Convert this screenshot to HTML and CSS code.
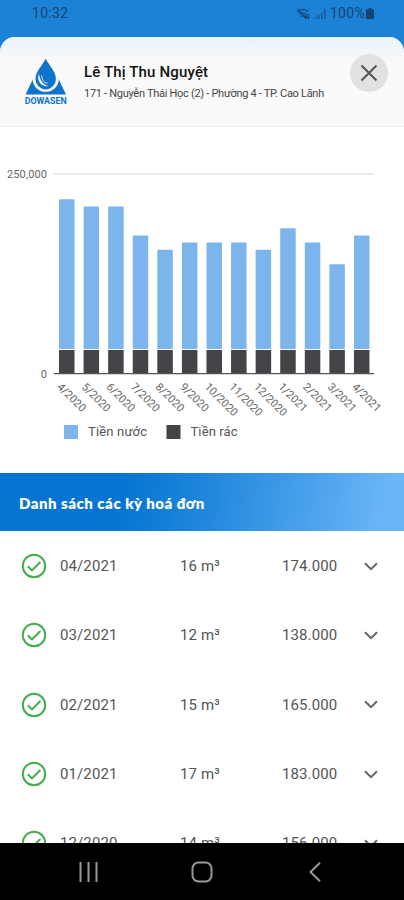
FILE: index.html
```html
<!DOCTYPE html>
<html lang="vi">
  <head>
    <meta charset="UTF-8" />
    <meta name="viewport" content="width=device-width, initial-scale=1.0" />
    <title>Dowasen | Hoá đơn tiền nước</title>
    <link rel="stylesheet" href="styles.css">
  </head>

  <body>
    <div class="status-bar">
      <span class="time">10:32</span>
      <div class="status-right">
        <svg width="15" height="12" viewBox="0 0 15 12" fill="none" stroke="currentColor" stroke-width="1.2">
          <path d="M1 3.6C4 .8 9 .8 12 3.6M3 6.2c2-1.8 5-1.8 7 0M5 8.6c1-.8 2.200-.8 3.200 0M1.500 1.500l8 8M10 5.500v5M12.500 6v5M8.500 9l1.500 1.500L11.500 9"/>
        </svg>
        <svg class="signal" width="11" height="10" viewBox="0 0 11 10" fill="currentColor">
          <path d="M0 8h1.600v2H0zM3 6h1.600v4H3zM6 3.500h1.600V10H6zM9 0h1.600v10H9z"/>
        </svg>
        <span>100%</span>
        <svg class="battery" width="8" height="11" viewBox="0 0 8 11" fill="currentColor">
          <path d="M2.500 0h3v1.200H7a1 1 0 0 1 1 1V10a1 1 0 0 1-1 1H1a1 1 0 0 1-1-1V2.200a1 1 0 0 1 1-1h1.500z"/>
        </svg>
      </div>
    </div>

    <main class="sheet">
      <header>
        <svg class="logo" width="46" height="48" viewBox="0 0 46 48">
          <path fill="#0f72cc" d="M10.500 20L2.500 36.500h40.500L35 20z"/>
          <path fill="#fafafa" d="M22.700 0C19 7 9.700 13 9.700 21.500a13 12.300 0 0 0 26 0C35.700 13 26.500 7 22.700 0z"/>
          <path fill="#0f72cc" d="M22.700 .5C20 7 12.500 13 12.500 21a10.200 10.400 0 0 0 20.400 0C32.900 13 25.500 7 22.700 .5z"/>
          <path fill="#fff" d="M15.800 15.500c-2.300 7 2 13.500 9.700 12.600-5.500-1.300-8.700-6-9.700-12.600z"/>
          <path fill="none" stroke="#fff" stroke-width=".8" d="M18.700 17.500c0 4 2 7 5.800 8"/>
          <text class="logo-text" x="22.700" y="46" text-anchor="middle" textLength="42" lengthAdjust="spacingAndGlyphs">DOWASEN</text>
        </svg>
        <div class="customer">
          <h1>Lê Thị Thu Nguyệt</h1>
          <p>171 - Nguyễn Thái Học (2) - Phường 4 - TP. Cao Lãnh</p>
        </div>
        <button class="close-btn" aria-label="Đóng">
          <svg width="18" height="18" viewBox="0 0 18 18" fill="none" stroke="#555" stroke-width="2">
            <path d="M1.500 1.500l15 15M16.500 1.500l-15 15"/>
          </svg>
        </button>
      </header>

      <section class="chart">
        <svg id="chart" width="404" height="346" viewBox="0 127 404 346">
          <path class="grid-line" d="M54 174h320"/>
          <text class="axis-label" x="47" y="178" text-anchor="end" textLength="40">250,000</text>
          <text class="axis-label" x="47" y="377.500" text-anchor="end">0</text>
          <g id="bars"></g>
          <path class="axis-line" d="M54 373.700h320"/>
          <rect class="bar-water" x="64" y="425" width="14" height="14"/>
          <text class="legend" x="88" y="436" textLength="59">Tiền nước</text>
          <rect class="bar-trash" x="166.500" y="425" width="14" height="14"/>
          <text class="legend" x="190.500" y="436" textLength="47">Tiền rác</text>
        </svg>
      </section>

      <h2>Danh sách các kỳ hoá đơn</h2>
      <ul class="bills" id="bills"></ul>
    </main>

    <nav class="nav-bar">
      <svg width="20" height="20" viewBox="0 0 20 20"><path d="M1.500 0v20M9.500 0v20M17.500 0v20"/></svg>
      <svg width="22" height="22" viewBox="0 0 22 22"><rect x="1.500" y="1.500" width="19" height="19" rx="6"/></svg>
      <svg width="12" height="20" viewBox="0 0 12 20"><path d="M11 .8L1.500 10l9.500 9.200"/></svg>
    </nav>

    <script>
      // top = y of the bar's upper edge on the 174..373 scale
      const months = [
        { label: "4/2020", top: 199.3 },
        { label: "5/2020", top: 206.5 },
        { label: "6/2020", top: 206.5 },
        { label: "7/2020", top: 235.5 },
        { label: "8/2020", top: 249.7 },
        { label: "9/2020", top: 242.5 },
        { label: "10/2020", top: 242.5 },
        { label: "11/2020", top: 242.5 },
        { label: "12/2020", top: 249.7 },
        { label: "1/2021", top: 228.2 },
        { label: "2/2021", top: 242.5 },
        { label: "3/2021", top: 264.2 },
        { label: "4/2021", top: 235.5 }
      ];

      document.getElementById("bars").innerHTML = months.map((m, i) => {
        const x = 59 + i * 24.58;
        return `
          <rect class="bar-water" x="${x}" y="${m.top}" width="15.500" height="${349 - m.top}" rx="1"/>
          <rect class="bar-trash" x="${x}" y="350" width="15.500" height="23.500"/>
          <text class="month" transform="translate(${x - 2.5} 387.500) rotate(45)">${m.label}</text>`;
      }).join("");

      const bills = [
        ["04/2021", 16, "174.000"],
        ["03/2021", 12, "138.000"],
        ["02/2021", 15, "165.000"],
        ["01/2021", 17, "183.000"],
        ["12/2020", 14, "156.000"]
      ];

      document.getElementById("bills").innerHTML = bills.map(([month, volume, amount]) => `
        <li>
          <svg width="26" height="26" viewBox="0 0 26 26" fill="none" stroke="#43ad4b" stroke-width="2">
            <circle cx="13" cy="13" r="11.200"/><path d="M6.800 13.200l4.200 4.200 8.400-8.400"/>
          </svg>
          <span>${month}</span>
          <span>${volume} m³</span>
          <span>${amount}</span>
          <svg width="14" height="9" viewBox="0 0 14 9" fill="none" stroke="#666" stroke-width="2">
            <path d="M1 1.200l6 6 6-6"/>
          </svg>
        </li>`).join("");
    </script>
  </body>
</html>
```
FILE: styles.css
```css
* {
  margin: 0;
  padding: 0;
  box-sizing: border-box;
}

body {
  display: flex;
  flex-direction: column;
  height: 900px;
  overflow: hidden;
  font-family: Roboto, sans-serif;
  background-color: #1c82d6;
}

.status-bar {
  display: flex;
  justify-content: space-between;
  height: 37px;
  padding: 5px 30px 0 32px;
  font-size: 14px;
  line-height: 17px;
  letter-spacing: 0.3px;
  color: #17426f;
}

.status-right {
  display: flex;
  align-items: center;
  height: 17px;
}

.status-right .signal {
  margin: 0 4px 0 4px;
  opacity: 0.6;
}

.status-right .battery {
  margin-left: 1px;
}

.sheet {
  flex: 1;
  min-height: 0;
  overflow: hidden;
  background-color: #fff;
  border-radius: 15px 15px 0 0;
}

header {
  display: flex;
  align-items: flex-start;
  height: 90px;
  padding: 21px 16px 0 23px;
  background: linear-gradient(#e9f2f9, #fafafa 30%);
  border-bottom: 1px solid #f3f3f3;
}

.logo-text {
  font-size: 9px;
  font-weight: 700;
  fill: #0f72cc;
}

.customer {
  flex: 1;
  padding: 5px 0 0 15px;
  white-space: nowrap;
}

.customer h1 {
  font-size: 15px;
  font-weight: 500;
  line-height: 19px;
  letter-spacing: 0.16px;
  color: #111;
}

.customer p {
  margin-top: 5px;
  font-size: 11px;
  line-height: 14px;
  letter-spacing: -0.29px;
  color: #444;
}

.close-btn {
  display: flex;
  align-items: center;
  justify-content: center;
  width: 38px;
  height: 38px;
  margin-top: -4px;
  border: none;
  border-radius: 50%;
  background-color: #e1e1e1;
}

.chart {
  height: 346px;
}

.grid-line {
  stroke: #e6e6e6;
  stroke-width: 1.5;
}

.axis-line {
  stroke: #555;
  stroke-width: 1.3;
}

.axis-label,
.month {
  font-size: 11px;
  fill: #666;
}

.bar-water {
  fill: #7cb5ec;
}

.bar-trash {
  fill: #434348;
}

.legend {
  font-size: 13px;
  fill: #555;
}

h2 {
  height: 58px;
  padding-left: 19px;
  font-family: Lato, sans-serif;
  font-size: 15px;
  font-weight: 800;
  line-height: 61px;
  letter-spacing: 0.5px;
  color: #fff;
  background: linear-gradient(100deg, #0574d2 30%, #2288dc 52%, #6bb6f8 95%);
}

.bills {
  padding-top: 0.5px;
  list-style: none;
}

.bills li {
  display: grid;
  grid-template-columns: 39px 120px 102px 82px 14px;
  align-items: center;
  height: 69.3px;
  padding-left: 21px;
  font-size: 15px;
  letter-spacing: 0.1px;
  color: #555;
}

.nav-bar {
  display: flex;
  align-items: center;
  justify-content: space-between;
  height: 57px;
  padding: 1px 83px 0 79px;
  background-color: #000;
}

.nav-bar svg {
  fill: none;
  stroke: #999;
  stroke-width: 2;
}

.nav-bar svg:nth-child(2) {
  margin-right: 4px;
}
```
